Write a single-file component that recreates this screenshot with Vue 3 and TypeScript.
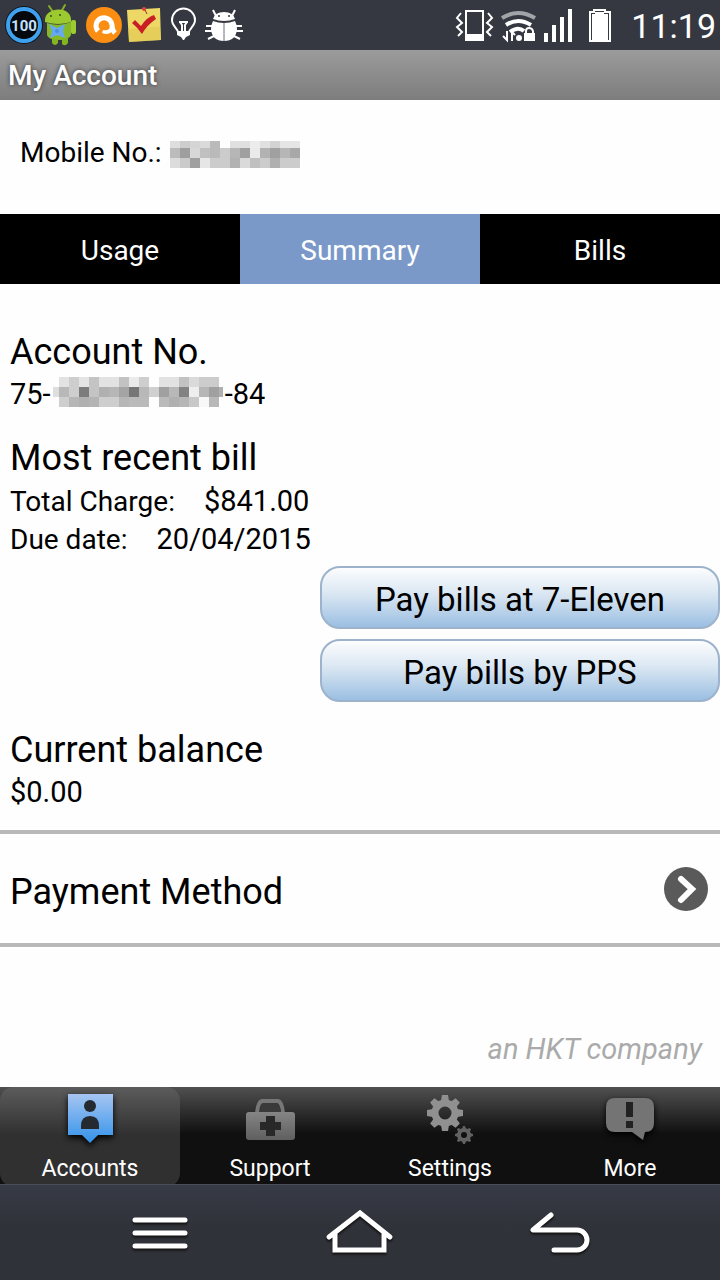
<script setup lang="ts">
interface Tab { label: string; active: boolean }
interface NavItem { label: string; icon: string }

const tabs: Tab[] = [
  { label: 'Usage', active: false },
  { label: 'Summary', active: true },
  { label: 'Bills', active: false },
]

const nav: NavItem[] = [
  { label: 'Accounts', icon: 'accounts' },
  { label: 'Support', icon: 'support' },
  { label: 'Settings', icon: 'settings' },
  { label: 'More', icon: 'more' },
]

// Grey levels of the privacy mosaics, one row of blocks per line
const mobileMask: number[][] = [
  [222, 205, 213, 218, 186, 254, 224, 224, 236, 224, 211, 229, 229],
  [188, 158, 216, 192, 186, 204, 182, 160, 234, 178, 160, 182, 168],
  [220, 202, 160, 230, 204, 204, 178, 218, 192, 204, 176, 204, 204],
]
const accountMask: number[][] = [
  [226, 206, 228, 196, 226, 226, 194, 234, 206, 254, 226, 226, 194, 218, 204, 204],
  [184, 206, 124, 196, 176, 182, 164, 118, 184, 208, 160, 184, 130, 238, 182, 160],
  [206, 182, 176, 180, 206, 206, 182, 186, 186, 254, 186, 176, 182, 200, 248, 184],
]

const teeth = [0, 45, 90, 135, 180, 225, 270, 315]
</script>

<template>
  <div class="phone">
    <div class="status">
      <svg width="246" height="50" viewBox="0 0 246 50" role="img" aria-label="Notifications">
        <circle cx="24" cy="25" r="19" fill="#111722" />
        <circle cx="24" cy="25" r="16" fill="#05080c" stroke="#3ea2ee" stroke-width="4" />
        <text x="24" y="31" text-anchor="middle" class="percent">100</text>
        <g>
          <path d="M49 6l4 6M65 5l-4 7" stroke="#86ad25" stroke-width="2" stroke-linecap="round" />
          <path d="M45 21c-1-14 25-16 26-2v3q-13 4-26 0z" fill="#9cc92f" />
          <path d="M47 23q12 4 24-1v13q-2 5-11 5-12 0-13-5z" fill="#87b927" />
          <rect x="71" y="20" width="5" height="14" rx="2" fill="#9dcb32" />
          <path d="M52 38v5q3 4 6 0v-4M62 38v6q3 3 6-1v-6" fill="#82b521" />
          <circle cx="51" cy="16" r="1" fill="#385016" /><circle cx="60" cy="15" r="1" fill="#385016" />
          <path d="M49 24l8 4 8-4-2 7 2 7-8-3-7 3 2-7z" fill="#67a9ee" />
          <circle cx="57" cy="31" r="2" fill="#4a8ede" />
        </g>
        <circle cx="104" cy="25" r="18" fill="#fa8e12" />
        <path d="M98 31A8 8 0 1 1 112 25q0 5 3 8" fill="none" stroke="#fff" stroke-width="5" />
        <path d="M110 27q-1 4-7 3l-1 3q7 3 11-3z" fill="#fff" />
        <path d="M127 10l33-2 1 32-32 2z" fill="#edd866" />
        <path d="M128 29l32-2 1 13-32 2z" fill="#ddc44d" opacity=".5" />
        <path d="M132 23l3-3 6 6q6-9 13-11l2 4q-9 6-14 15-4-6-10-11z" fill="#c91f24" />
        <circle cx="144" cy="9" r="2" fill="#de4540" /><path d="M145 10l2 4" stroke="#8f3027" />
        <g fill="none" stroke="#fff" stroke-width="2">
          <path d="M178 32c0-3-6-6-6-12a11 11 0 0 1 23 0c0 6-6 9-6 12z" />
          <path d="M179 22h9M182 32v-7l-2-3M185 32v-7l2-3" />
        </g>
        <path d="M177 31h13v4l-4 2-2 3h-1l-2-3-4-2z" fill="#fff" />
        <path d="M216 16l-3-6M232 16l3-6M213 26h-7M213 31h-8M214 36l-6 3M235 26h7M235 31h8M234 36l6 3" fill="none" stroke="#fff" stroke-width="2" />
        <path d="M213 19q2-7 11-7t11 7q-5 2-11 2t-11-2z" fill="#fff" />
        <path d="M213 21q5 2 11 2t11-2q2 4 2 8-1 12-13 12t-13-12q0-4 2-8z" fill="#fff" />
        <path d="M224 23v18" stroke="#6d7077" />
        <circle cx="219" cy="16" r="1" fill="#343740" /><circle cx="229" cy="16" r="1" fill="#343740" />
      </svg>
      <div class="system">
        <svg width="160" height="50" viewBox="0 0 160 50" role="img" aria-label="Vibrate, Wi-Fi, signal and battery">
          <g fill="none" stroke="#fff" stroke-width="2">
            <rect x="15" y="11" width="17" height="29" />
            <path d="M10 13l-4 5 5 5-5 4 5 5-4 4M37 13l4 5-5 5 5 4-5 5 4 4" />
          </g>
          <path d="M14 34h19v7H14z" fill="#fff" />
          <path d="M51 18q16-10 33 0" fill="none" stroke="#a2a4a8" stroke-width="4" />
          <path d="M55 25q12-8 25 0M59 32q8-6 14-1" fill="none" stroke="#fff" stroke-width="4" />
          <circle cx="68" cy="38" r="3" fill="#fff" />
          <path d="M52 36l4 4V31M61 41V32l3 3" fill="none" stroke="#fff" stroke-width="2" />
          <rect x="73" y="33" width="11" height="8" fill="#fff" />
          <path d="M75 33v-2q0-3 3-3t4 3v2" fill="none" stroke="#fff" stroke-width="2" />
          <path d="M93 33h4v9h-4zM101 25h4v17h-4zM109 17h4v25h-4zM117 9h4v33h-4z" fill="#fff" />
          <path d="M139 12h4v-2h11v2h5v29h-20z" fill="none" stroke="#fff" stroke-width="2" />
          <path d="M141 14h3v-2h9v2h4v26h-16z" fill="#fff" />
        </svg>
        <time class="clock">11:19</time>
      </div>
    </div>

    <header class="title"><h1>My Account</h1></header>

    <main>
      <p class="mobile">
        <span>Mobile No.:</span>
        <svg width="130" height="30" viewBox="0 0 130 30" role="img" aria-label="Hidden number">
          <g v-for="(row, r) in mobileMask" :key="r">
            <rect v-for="(v, c) in row" :key="c" :x="c * 10" :y="r === 0 ? 3 : r * 10" width="10" :height="r === 0 ? 7 : 10" :fill="`rgb(${v},${v},${v})`" />
          </g>
        </svg>
      </p>

      <div class="tabs" role="tablist">
        <button v-for="t in tabs" :key="t.label" type="button" role="tab" :aria-selected="t.active" :class="['tab', { active: t.active }]">{{ t.label }}</button>
      </div>

      <section class="block account">
        <h2>Account No.</h2>
        <p class="number value">
          <span>75-</span>
          <svg width="170" height="34" viewBox="0 0 170 34" role="img" aria-label="Hidden digits">
            <rect x="0" y="10" width="6" height="10" fill="#dedede" />
            <g v-for="(row, r) in accountMask" :key="r">
              <rect v-for="(v, c) in row" :key="c" :x="6 + c * 10" :y="r * 10" width="10" height="10" :fill="`rgb(${v},${v},${v})`" />
            </g>
            <rect x="166" y="10" width="4" height="10" fill="#b0b0b0" />
          </svg>
          <span>-84</span>
        </p>
      </section>

      <section class="block">
        <h2>Most recent bill</h2>
        <p class="pair"><span>Total Charge:</span><span class="value">$841.00</span></p>
        <p class="pair"><span>Due date:</span><span class="value">20/04/2015</span></p>
      </section>

      <div class="pay">
        <button type="button">Pay bills at 7-Eleven</button>
        <button type="button">Pay bills by PPS</button>
      </div>

      <section class="block balance">
        <h2>Current balance</h2>
        <p class="value">$0.00</p>
      </section>

      <button type="button" class="method">
        <span>Payment Method</span>
        <svg width="46" height="46" viewBox="0 0 46 46" aria-hidden="true">
          <circle cx="23" cy="23" r="22" fill="#5a5a5a" />
          <path d="M18 13l11 10-11 11" fill="none" stroke="#fff" stroke-width="6" stroke-linecap="round" />
        </svg>
      </button>

      <p class="company">an HKT company</p>
    </main>

    <nav class="bottom">
      <button v-for="(n, i) in nav" :key="n.label" type="button" :class="['item', { current: i === 0 }]">
        <svg width="60" height="64" viewBox="0 0 60 64" aria-hidden="true">
          <defs>
            <linearGradient id="blue" x1="0" y1="0" x2="0" y2="1"><stop offset="0" stop-color="#a6c5f2" /><stop offset="1" stop-color="#3292ea" /></linearGradient>
            <linearGradient id="grey" x1="0" y1="0" x2="0" y2="1"><stop offset="0" stop-color="#858585" /><stop offset="1" stop-color="#5f5f5f" /></linearGradient>
          </defs>
          <g v-if="n.icon === 'accounts'">
            <path d="M8 7h45v41H38l-8 8-8-8H8z" class="drop" fill="url(#blue)" />
            <circle cx="30" cy="19" r="6" fill="#252a30" />
            <path d="M21 42v-3q0-10 9-10t9 10v3z" fill="#252a30" />
          </g>
          <g v-else-if="n.icon === 'support'">
            <path d="M17 26q1-11 5-12h16q4 1 5 12" fill="none" stroke="#777" stroke-width="4" />
            <path d="M20 25q1-7 3-8h14q3 1 4 8z" fill="#3a3a3a" />
            <rect x="6" y="25" width="49" height="28" rx="3" fill="url(#grey)" />
            <path d="M26 29h9v6h6v8h-6v6h-9v-6h-6v-8h6z" fill="#282828" />
          </g>
          <g v-else-if="n.icon === 'settings'">
            <g transform="translate(25 26)" fill="#909090">
              <path v-for="a in teeth" :key="a" d="M-4-12l1-6h6l1 6z" :transform="`rotate(${a})`" />
              <circle r="10" fill="none" stroke="#909090" stroke-width="7" />
            </g>
            <g transform="translate(44 48)" fill="#626262">
              <path v-for="a in teeth" :key="a" d="M-2-6l1-3h2l1 3z" :transform="`rotate(${a})`" />
              <circle r="5" fill="none" stroke="#626262" stroke-width="4" />
            </g>
          </g>
          <g v-else>
            <path d="M15 11h30q9 0 9 9v16q0 9-9 9l-2 8-11-8H15q-9 0-9-9V20q0-9 9-9z" class="drop" fill="#747474" />
            <path d="M26 15h7v15h-7zM26 34h7v7h-7z" fill="#222" />
          </g>
        </svg>
        <span>{{ n.label }}</span>
      </button>
    </nav>

    <div class="keys">
      <button type="button" aria-label="Menu">
        <svg width="70" height="60" viewBox="0 0 70 60"><path d="M10 17h50M10 30h50M10 43h50" /></svg>
      </button>
      <button type="button" aria-label="Home">
        <svg width="70" height="60" viewBox="0 0 70 60"><path d="M4 34L35 10l30 24M10 31v16h49V31" /></svg>
      </button>
      <button type="button" aria-label="Back">
        <svg width="70" height="60" viewBox="0 0 70 60"><path d="M26 12L8 27h44a10 10 0 0 1 0 20H29" stroke-linejoin="round" /></svg>
      </button>
    </div>
  </div>
</template>

<style>
body { margin: 0; background: #fff; }
</style>

<style scoped>
.phone {
  min-height: 100vh;
  display: flex;
  flex-direction: column;
  background: #fefefe;
  color: #000;
  font-family: Roboto, "Liberation Sans", sans-serif;
  font-size: 28px;
  line-height: 38px;
}
h1, h2, p { margin: 0; font-weight: 400; }
button { font: inherit; color: inherit; border: 0; padding: 0; margin: 0; background: none; }
svg { display: block; flex: none; }
.status {
  height: 50px;
  display: flex;
  justify-content: space-between;
  background: #353840;
  color: #fff;
}
.percent { font: 700 15px Roboto, sans-serif; fill: #c4e2ff; }
.system { display: flex; gap: 20px; padding-right: 4px; }
.clock { font-size: 34px; line-height: 52px; }
.title {
  height: 50px;
  padding-left: 8px;
  background: linear-gradient(#9b9b9b, #7d7d7d);
}
.title h1 {
  font-size: 28px;
  font-weight: 500;
  line-height: 52px;
  color: #fff;
  text-shadow: 0 0 4px #333;
}
main { flex: 1; display: flex; flex-direction: column; }
.mobile { display: flex; align-items: center; gap: 8px; padding: 34px 20px 42px; }
.tabs { display: grid; grid-template-columns: repeat(3, 1fr); background: #000; }
.tab { height: 70px; padding-top: 4px; color: #fff; text-align: center; }
.tab.active { background: #7a99c9; }
.block { padding: 0 10px; }
.block h2 { font-size: 36px; line-height: 46px; }
.value { font-size: 29px; }
.account { padding-top: 45px; padding-bottom: 22px; }
.number { display: flex; align-items: center; gap: 2px; }
.pair { display: flex; gap: 29px; padding-top: 1px; line-height: 37px; }
.pair:first-of-type { padding-top: 2px; }
.pay {
  width: 400px;
  margin-top: 8px;
  align-self: flex-end;
  display: flex;
  flex-direction: column;
  gap: 10px;
}
.pay button {
  height: 63px;
  padding-top: 4px;
  border: 2px solid #9db2cb;
  border-radius: 20px;
  background: linear-gradient(#fcfdfe, #d9e6f2 45%, #9bbfe2);
  font-size: 33px;
}
.balance { padding-top: 25px; padding-bottom: 18px; }
.balance .value { line-height: 39px; }
.method {
  display: flex;
  align-items: center;
  justify-content: space-between;
  height: 117px;
  padding: 0 11px 0 10px;
  border-top: 4px solid #b9b9b9;
  border-bottom: 4px solid #b9b9b9;
  font-size: 36px;
  text-align: left;
}
.method span { padding-top: 6px; }
.company {
  margin-top: auto;
  padding: 0 18px 19px 0;
  text-align: right;
  font-size: 29px;
  font-style: italic;
  color: #aaa;
}
.bottom {
  display: grid;
  grid-template-columns: repeat(4, 1fr);
  height: 97px;
  background: linear-gradient(#505050, #101010 48%);
}
.item {
  display: flex;
  flex-direction: column;
  align-items: center;
  color: #fff;
  font-size: 23px;
  line-height: 36px;
}
.item.current { border-radius: 14px; background: linear-gradient(#5c5c5c, #303030 48%); }
.drop { filter: drop-shadow(0 3px 3px #000); }
.keys {
  display: flex;
  justify-content: space-between;
  align-items: center;
  height: 95px;
  padding: 0 125px;
  border-top: 1px solid #4a4e58;
  background: linear-gradient(#373b46, #303239 45%);
}
.keys svg { fill: none; stroke: #fff; stroke-width: 5; stroke-linecap: round; filter: drop-shadow(0 2px 1px #111); }
</style>
